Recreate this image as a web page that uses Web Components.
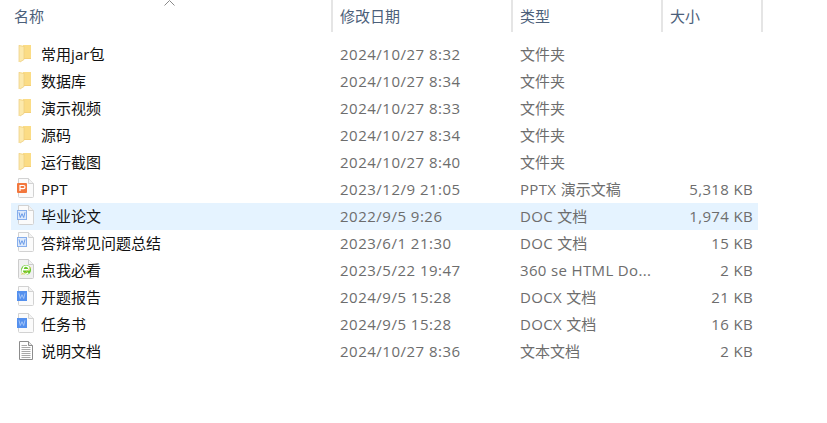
<!DOCTYPE html>
<html lang="zh"><head><meta charset="utf-8"><title>Files</title>
<style>html,body{margin:0;background:#fff;height:100%}body{font:15px/27px "Open Sans","Noto Sans CJK SC",sans-serif;overflow:hidden}</style></head>
<body><file-list></file-list>
<script>
const S='"Open Sans","Noto Sans CJK SC",sans-serif';
const sheet=(fill,color)=>`<path d="M1.5 .5H11.5L16.5 5.5V18.5a1 1 0 0 1-1 1H2.5a1 1 0 0 1-1-1Z" fill="${fill}" stroke="${color}"/><path d="M11.5 .5V5.5H16.5" fill="#f2f2f2" stroke="${color}"/>`;
const W=(bg,fg,line)=>`<svg width="17" height="20" viewBox="0 0 17 20">${sheet('#fbfbfb','#d2d2d2')}<rect x=".5" y="5.5" width="9" height="9" fill="${bg}" stroke="${line}"/><path d="M2 7.3l1.3 5.2 1.7-3.8 1.7 3.8L8 7.3" fill="none" stroke="${fg}" stroke-width=".9"/></svg>`;
const icons={
folder:`<svg width="17" height="20" viewBox="0 0 17 20"><path d="M6 2H14V16H6Z" fill="#fbdc85"/><path d="M2 2.2 7 3V16.5L3 19H2Z" fill="#fce9ac"/><path d="M2 2.2 7 3V3.8L2 3Z" fill="#f1cf78"/><path d="M2 2.2V19" stroke="#efd088" fill="none" stroke-width=".8"/><path d="M7 3V16.5L3 19" stroke="#efcf80" fill="none" stroke-width=".8"/><path d="M7 15H14V16H7Z" fill="#f4cf78"/></svg>`,
ppt:`<svg width="17" height="20" viewBox="0 0 17 20">${sheet('#fbfbfb','#d2d2d2')}<rect x="0" y="5" width="10" height="10" rx="1" fill="#f2773d"/><path d="M3 13V7.5H6.4a1.5 1.5 0 0 1 0 3.2H3" fill="none" stroke="#fff" stroke-width="1.2"/></svg>`,
doc:W('#dde9fb','#5c92e5','#86aeec'),
docx:W('#5490ee','#a9c8f8','#5490ee'),
html:`<svg width="17" height="20" viewBox="0 0 17 20">${sheet('#f1f1f1','#cccccc')}<circle cx="9" cy="11" r="5" fill="#66c827"/><path d="M6 10.8H12A3 3 0 0 0 6.1 9.6 3 3 0 0 0 11.2 13.8" fill="none" stroke="#fff" stroke-width="1.4"/><path d="M4 15.2Q8 15.5 14 8" fill="none" stroke="#e5c14c" stroke-width=".7"/></svg>`,
txt:`<svg width="17" height="20" viewBox="0 0 17 20"><path d="M2.5 1.5H11.5L15.5 5.5V19.5H2.5Z" fill="#fff" stroke="#8c8c8c"/><path d="M11.5 1.5V5.5H15.5" fill="#e8e8e8" stroke="#8c8c8c"/><path d="M4.5 5.5H10M4.5 7.5H13.5M4.5 9.5H13.5M4.5 11.5H13.5M4.5 13.5H13.5M4.5 15.5H13.5M4.5 17.5H13.5" stroke="#a9a9a9"/></svg>`};
const data=[
['folder','常用jar包','2024/10/27 8:32','文件夹',''],
['folder','数据库','2024/10/27 8:34','文件夹',''],
['folder','演示视频','2024/10/27 8:33','文件夹',''],
['folder','源码','2024/10/27 8:34','文件夹',''],
['folder','运行截图','2024/10/27 8:40','文件夹',''],
['ppt','PPT','2023/12/9 21:05','PPTX 演示文稿','5,318 KB'],
['doc','毕业论文','2022/9/5 9:26','DOC 文档','1,974 KB',1],
['doc','答辩常见问题总结','2023/6/1 21:30','DOC 文档','15 KB'],
['html','点我必看','2023/5/22 19:47','360 se HTML Do...','2 KB'],
['docx','开题报告','2024/9/5 15:28','DOCX 文档','21 KB'],
['docx','任务书','2024/9/5 15:28','DOCX 文档','16 KB'],
['txt','说明文档','2024/10/27 8:36','文本文档','2 KB']];
const L=s=>s.replace(/[\x20-\x7e]+/g,m=>`<span class="l">${m}</span>`);
class ColHead extends HTMLElement{constructor(){super();this.attachShadow({mode:'open'}).innerHTML=`<style>:host{display:block;box-sizing:border-box;height:32px;padding:2px 0 0 7px;border-right:2px solid #e5e5e5;color:#4c607a;font:15px/29px ${S}}:host(.first){padding-left:14px}</style><slot></slot>`}}
class FileRow extends HTMLElement{
 constructor(){super();this.attachShadow({mode:'open'})}
 connectedCallback(){const [ic,n,d,t,s,sel]=JSON.parse(this.dataset.r);
 this.shadowRoot.innerHTML=`<style>:host{display:grid;grid-template-columns:321px 180px 150px 96px;width:747px;height:27px;font:15px/27px ${S};color:#6d6d6d;background:${sel?'#e5f3ff':'transparent'}}
 .l{letter-spacing:.5px}.n{display:flex;gap:7px;padding-left:6px;color:#111}.i{display:block;width:17px;height:20px;margin-top:2px}.i svg{display:block}
 .d,.t{padding-left:8px;white-space:nowrap}.s{text-align:right;white-space:nowrap;padding-right:5px}.s .l{letter-spacing:.35px}.n .l{letter-spacing:.1px}.t .l{letter-spacing:.35px}</style>
 <div class="n"><span class="i">${icons[ic]}</span><span>${L(n)}</span></div><div class="d">${L(d)}</div><div class="t">${L(t)}</div><div class="s">${L(s)}</div>`}}
class FileList extends HTMLElement{constructor(){super();this.attachShadow({mode:'open'}).innerHTML=`<style>:host{display:block;width:827px}
 .h{display:grid;grid-template-columns:333px 180px 150px 100px;height:32px}.caret{position:absolute;left:164px;top:0}
 .b{padding:9px 0 0 11px}</style>
 <svg class="caret" width="11" height="6" viewBox="0 0 11 6"><path d="M.5 5.5L5.5 .5 10.5 5.5" fill="none" stroke="#8a8a8a"/></svg>
 <div class="h"><col-head class="first">名称</col-head><col-head>修改日期</col-head><col-head>类型</col-head><col-head>大小</col-head></div>
 <div class="b">${data.map(r=>`<file-row data-r='${JSON.stringify(r)}'></file-row>`).join('')}</div>`}}
customElements.define('col-head',ColHead);customElements.define('file-row',FileRow);customElements.define('file-list',FileList);
</script></body></html>
